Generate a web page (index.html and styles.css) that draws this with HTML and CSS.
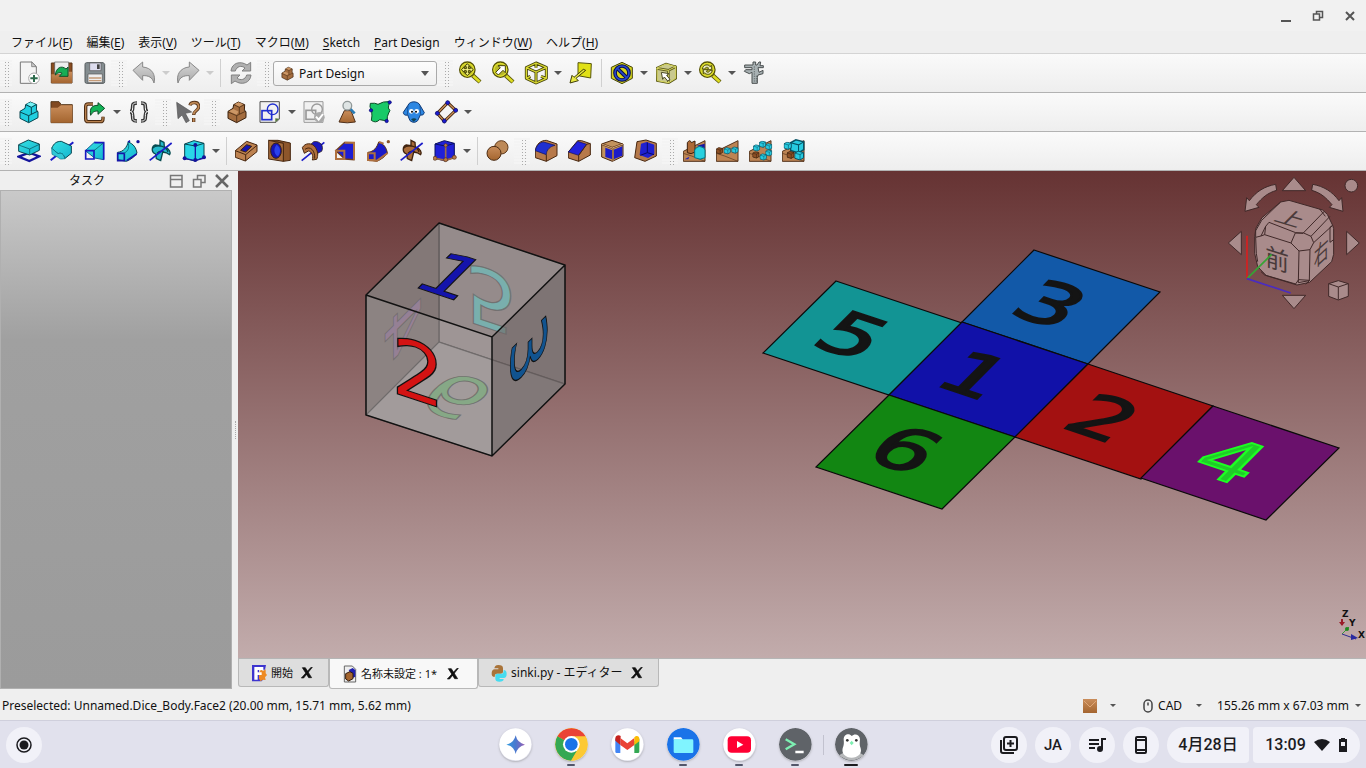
FILE: index.html
```html
<!DOCTYPE html>
<html lang="ja">
<head>
<meta charset="utf-8">
<title>FreeCAD</title>
<link rel="stylesheet" href="styles.css">
</head>
<body>
<svg class="defs" aria-hidden="true">
  <defs>
    <linearGradient id="gBrown" x1="0" y1="0" x2="0" y2="1"><stop offset="0" stop-color="#c98d5b"/><stop offset="1" stop-color="#a4652f"/></linearGradient>
    <linearGradient id="gCyan" x1="0" y1="0" x2="1" y2="1"><stop offset="0" stop-color="#34e0e2"/><stop offset="1" stop-color="#16b6d0"/></linearGradient>
    <linearGradient id="gGrey" x1="0" y1="0" x2="0" y2="1"><stop offset="0" stop-color="#d8d8d8"/><stop offset="1" stop-color="#a8a8a8"/></linearGradient>
    <linearGradient id="gGem" x1="0" y1="0" x2="1" y2="0"><stop offset="0" stop-color="#2f9be0"/><stop offset=".5" stop-color="#4b79cf"/><stop offset="1" stop-color="#9a5fb4"/></linearGradient>

    <symbol id="i-new" viewBox="0 0 72 72"><path d="M10 3h34l14 14v50H10z" fill="#f4f4f4" stroke="#777" stroke-width="3"/><path d="M44 3v14h14z" fill="#ccc" stroke="#666" stroke-width="2"/><circle cx="51" cy="52" r="16" fill="#fff" stroke="#aaa" stroke-width="3"/><path d="M51 42v21M40 52h22" stroke="#2c6b4c" stroke-width="6"/></symbol>
    <symbol id="i-open" viewBox="0 0 72 72"><path d="M4 6h62v60H4z" fill="#8a4d20" stroke="#5c3719" stroke-width="3"/><path d="M14 3h42v36H14z" fill="#eee" stroke="#555" stroke-width="2"/><path d="M4 40h28l8-8h26v34H4z" fill="url(#gBrown)"/><path d="M16 42c2-22 18-30 32-18l6-6v28H28l8-9c-8-6-14 0-20 5z" fill="#16ad55" stroke="#12502a" stroke-width="3"/></symbol>
    <symbol id="i-save" viewBox="0 0 72 72"><path d="M6 10q0-5 5-5h50l4 5v52q0 5-5 5H11q-5 0-5-5z" fill="#848d90" stroke="#555b5d" stroke-width="3"/><path d="M20 6h34v23H20z" fill="#dde" stroke="#555" stroke-width="2"/><path d="M42 10h8v14h-8z" fill="#444"/><path d="M15 39h43v26H15z" fill="#eee" stroke="#555" stroke-width="2"/><path d="M18 51h37M18 59h37" stroke="#c49a77" stroke-width="4"/></symbol>
    <symbol id="i-undo" viewBox="0 0 72 72"><path d="M3 28L32 3v15c28 2 40 24 34 48-5-17-16-23-34-22v14z" fill="url(#gGrey)" stroke="#888" stroke-width="3" stroke-linejoin="round"/></symbol>
    <symbol id="i-refresh" viewBox="0 0 72 72"><g fill="#b0b0b0" stroke="#808080" stroke-width="3" stroke-linejoin="round"><path d="M6 30C8 6 34-2 54 12l11-8v26H39l9-9C37 12 23 16 19 30z"/><path d="M6 30C8 6 34-2 54 12l11-8v26H39l9-9C37 12 23 16 19 30z" transform="rotate(180 36 36)"/></g></symbol>
    <symbol id="i-part" viewBox="0 0 72 72"><path d="M9 34l15-9 2-11 14-8 19 8-1 17 5 4v18L35 68 9 55z" fill="#a46d3f" stroke="#3a210d" stroke-width="3" stroke-linejoin="round"/><path d="M29 12l12-5 14 6-12 7zM12 34l13-7 16 8-7 9z" fill="#cc9766"/><path d="M9 36l26 11 28-14M35 47v20M26 14l17 8v20M43 22l15-8" fill="none" stroke="#3a210d" stroke-width="2"/></symbol>
    <symbol id="i-partc" viewBox="0 0 72 72"><path d="M9 34l15-9 2-11 14-8 19 8-1 17 5 4v18L35 68 9 55z" fill="#20cfe0" stroke="#08444e" stroke-width="3" stroke-linejoin="round"/><path d="M29 12l12-5 14 6-12 7z" fill="#78f2f4"/><path d="M9 36l26 11 28-14M35 47v20M26 14l17 8v20M43 22l15-8" fill="none" stroke="#08444e" stroke-width="3"/></symbol>
    <symbol id="i-lens" viewBox="0 0 72 72"><path d="M44 43l22 20" stroke="#585406" stroke-width="13"/><path d="M45 44l20 18" stroke="#dcdc22" stroke-width="8"/><circle cx="28" cy="26" r="23" fill="#b9b92a" stroke="#585406" stroke-width="4"/><circle cx="28" cy="26" r="19" fill="none" stroke="#dede2c" stroke-width="4"/></symbol>
    <symbol id="i-fit" viewBox="0 0 72 72"><use href="#i-lens"/><path d="M28 8l8 9h-5v6h6v-5l9 8-9 8v-5h-6v6h5l-8 9-8-9h5v-6h-6v5l-9-8 9-8v5h6v-6h-5z" fill="#f4f480" stroke="#454207" stroke-width="3"/></symbol>
    <symbol id="i-fitsel" viewBox="0 0 72 72"><use href="#i-lens"/><path d="M14 34l14-14-7-6h22v21l-7-7-14 14z" fill="#fff" stroke="#454207" stroke-width="3"/></symbol>
    <symbol id="i-iso" viewBox="0 0 72 72"><g fill="none" stroke-linejoin="round"><path d="M36 6l31 13v33L36 66 7 52V20zM7 20l29 13 31-14M36 33v32M36 6v14M7 52l12-6M67 52l-16-6" stroke="#45430a" stroke-width="9"/><path d="M36 6l31 13v33L36 66 7 52V20zM7 20l29 13 31-14M36 33v32M36 6v14M7 52l12-6M67 52l-16-6" stroke="#d8d832" stroke-width="4"/></g></symbol>
    <symbol id="i-face" viewBox="0 0 72 72"><path d="M30 5l40 3-2 43-38-7z" fill="#e1e116" stroke="#55540b" stroke-width="3"/><path d="M53 28L24 52l7 7-25 7 6-23 6 6 28-24z" fill="#e9e942" stroke="#3f3e08" stroke-width="3"/></symbol>
    <symbol id="i-style" viewBox="0 0 72 72"><path d="M36 4l31 15v33L36 68 4 52V19z" fill="#d4d41c" stroke="#45430a" stroke-width="3"/><g fill="none"><circle cx="36" cy="36" r="21" stroke="#070b4e" stroke-width="11"/><path d="M22 22l28 28" stroke="#070b4e" stroke-width="11"/><circle cx="36" cy="36" r="21" stroke="#2748c8" stroke-width="5"/><path d="M22 22l28 28" stroke="#2748c8" stroke-width="5"/></g></symbol>
    <symbol id="i-boxsel" viewBox="0 0 72 72"><path d="M8 20L36 7l31 9v37L44 67 8 60z" fill="#c9c98e" stroke="#5a581a" stroke-width="4" stroke-linejoin="round"/><path d="M8 22l35 6 24-12M43 28v38" fill="none" stroke="#5a581a" stroke-width="8"/><path d="M9 21L36 9l29 8v35L44 65 10 59zM8 22l35 6 24-12M43 28v38" fill="none" stroke="#dada62" stroke-width="3"/><path d="M22 34l23 4-7 5 10 12-7 5-10-12-5 7z" fill="#fff" stroke="#4c4c25" stroke-width="3"/></symbol>
    <symbol id="i-zoom" viewBox="0 0 72 72"><use href="#i-lens"/><path d="M13 24c2-15 19-15 23-7l5-4v13H27l5-5c-6-5-11 0-12 3zM43 28c-3 15-19 14-23 7l-4 4V26h13l-4 6c6 4 10 0 11-4z" fill="#ececc0" stroke="#55530f" stroke-width="3"/></symbol>
    <symbol id="i-caliper" viewBox="0 0 72 72"><path d="M8 12h25V3h8v9h4l6-9h5l-2 11h10v6H48l3 14 12-6v10l-15 4-2 7v18H30V34l-8 4-15-7 4-5h19v-6H8z" fill="#a8b1b3" stroke="#4b5051" stroke-width="3"/><path d="M37 16v46M43 44v18" stroke="#4a5051" stroke-width="2" stroke-dasharray="4 3"/></symbol>

    <symbol id="i-group" viewBox="0 0 72 72"><path d="M3 5h24l7 9h33v54H3z" fill="#824a22" stroke="#57391d" stroke-width="3"/><path d="M3 23h20l10-7h34v52H3z" fill="url(#gBrown)"/></symbol>
    <symbol id="i-link" viewBox="0 0 72 72"><path d="M30 12H16q-8 0-8 8v36q0 9 8 9h36q8 0 8-9v-6" fill="none" stroke="#4b2b12" stroke-width="10"/><path d="M30 12H16q-8 0-8 8v36q0 9 8 9h36q8 0 8-9v-6" fill="none" stroke="#b9824f" stroke-width="4"/><path d="M23 46c-4-22 4-30 22-30V8l20 17-20 18v-10c-10 0-16 2-22 13z" fill="#12b357" stroke="#0a4b24" stroke-width="3"/></symbol>
    <symbol id="i-brace" viewBox="0 0 72 72"><g fill="none" stroke="#333" stroke-width="11"><path d="M30 9c-13 0-13 5-13 13 0 7-1 13-8 13 7 0 8 6 8 14 0 9 0 14 13 14"/><path d="M42 9c13 0 13 5 13 13 0 7 1 13 8 13-7 0-8 6-8 14 0 9 0 14-13 14"/></g><g fill="none" stroke="#fff" stroke-width="3"><path d="M29 9c-12 0-12 5-12 13 0 7-1 13-7 13 6 0 7 6 7 14 0 9 0 14 12 14"/><path d="M43 9c12 0 12 5 12 13 0 7 1 13 7 13-6 0-7 6-7 14 0 9 0 14-12 14"/></g></symbol>
    <symbol id="i-what" viewBox="0 0 72 72"><path d="M2 7l45 29-19 4 12 22-10 6-12-23-12 11z" fill="#6e6e70" stroke="#555" stroke-width="2"/><path d="M42 16c2-10 26-14 26 4 0 13-14 10-15 25M53 54v12" fill="none" stroke="#58351b" stroke-width="10"/><path d="M42 15c4-8 26-12 26 5 0 13-14 10-15 23M53 55v10" fill="none" stroke="#c18a56" stroke-width="5"/></symbol>
    <symbol id="i-sketch" viewBox="0 0 72 72"><path d="M6 5h58v52l-10 10H6z" fill="#f1f1f1" stroke="#4e4e4e" stroke-width="3"/><path d="M64 56l-12 11V55z" fill="#57793b"/><rect x="12" y="32" width="29" height="27" fill="none" stroke="#202fd0" stroke-width="5"/><circle cx="44" cy="28" r="16" fill="none" stroke="#202fd0" stroke-width="4"/></symbol>
    <symbol id="i-check" viewBox="0 0 72 72"><path d="M6 5h57v62H6z" fill="#f1f1f1" stroke="#999" stroke-width="3"/><rect x="12" y="31" width="29" height="27" fill="none" stroke="#999" stroke-width="5"/><circle cx="45" cy="28" r="16" fill="none" stroke="#999" stroke-width="4"/><circle cx="52" cy="52" r="16" fill="#aaa"/><path d="M42 50l8 9 13-17" fill="none" stroke="#fff" stroke-width="6"/></symbol>
    <symbol id="i-map" viewBox="0 0 72 72"><path d="M28 32h20l13 34q-24 5-49 0z" fill="url(#gBrown)" stroke="#50301a" stroke-width="3"/><path d="M45 26l14 14" stroke="#267ab4" stroke-width="8"/><circle cx="37" cy="17" r="13" fill="#dfe5e5" stroke="#909898" stroke-width="4"/></symbol>
    <symbol id="i-shape" viewBox="0 0 72 72"><path d="M7 10q15-2 23 3Q45 3 66 5q-5 12-5 19 9 8 1 15-6 10-4 25-14-4-23-5-12 12-25 2 3-12 1-29Q3 20 7 10z" fill="#18c968" stroke="#0c4d27" stroke-width="3"/><g fill="#1818c8" stroke="#06066a" stroke-width="2"><circle cx="65" cy="7" r="5"/><circle cx="9" cy="31" r="5"/><circle cx="56" cy="63" r="5"/></g></symbol>
    <symbol id="i-sheep" viewBox="0 0 72 72"><path d="M21 16C25 2 52 2 57 16l13 22q-3 10-12 7L50 62q-11 10-23 0l-7-17q-12 3-13-8z" fill="#2d87e2" stroke="#113c79" stroke-width="3"/><path d="M21 17l-2 27M57 17l2 27" stroke="#113c79" stroke-width="2"/><circle cx="31" cy="34" r="7" fill="#fff"/><circle cx="47" cy="34" r="7" fill="#fff"/><circle cx="33" cy="35" r="3"/><circle cx="45" cy="35" r="3"/><path d="M30 58q9-7 17 0l-9 7z" fill="#145"/></symbol>
    <symbol id="i-datum" viewBox="0 0 72 72"><path d="M41 8l24 23-34 33L10 40z" fill="none" stroke="#41240e" stroke-width="9"/><path d="M41 8l24 23-34 33L10 40z" fill="none" stroke="#c88d57" stroke-width="4"/><g fill="#1c1cd0" stroke="#090962" stroke-width="2"><circle cx="41" cy="8" r="6"/><circle cx="65" cy="31" r="6"/><circle cx="31" cy="63" r="6"/><circle cx="10" cy="40" r="6"/></g></symbol>

    <symbol id="i-pad" viewBox="0 0 72 72"><path d="M5 53l32-12 30 11-30 14z" fill="none" stroke="#15159c" stroke-width="7"/><path d="M5 17L34 3l33 12v19L38 48 5 37z" fill="url(#gCyan)" stroke="#08444e" stroke-width="3"/><path d="M5 18l33 12 29-14M38 30v17" fill="none" stroke="#08444e" stroke-width="2"/></symbol>
    <symbol id="i-rev" viewBox="0 0 72 72"><path d="M2 64L70 10" stroke="#1c1cc8" stroke-width="6"/><path d="M5 28C12 12 20 7 34 7l30 14v22L44 59C42 46 34 40 24 44z" fill="url(#gCyan)" stroke="#08444e" stroke-width="3"/><path d="M5 28l19 16C34 40 42 46 44 59c-12 2-14 2-20-4L6 46z" fill="#30c8d6" stroke="#0a7c91" stroke-width="2"/></symbol>
    <symbol id="i-loft" viewBox="0 0 72 72"><path d="M7 35L34 10l28 1v51L35 57z" fill="url(#gCyan)" stroke="#11619a" stroke-width="3"/><path d="M34 11h28v51M8 35h25v25H8z" fill="none" stroke="#1919c0" stroke-width="5"/><path d="M33 35l28-23" stroke="#055" stroke-width="2"/></symbol>
    <symbol id="i-pipe" viewBox="0 0 72 72"><path d="M5 40c18-2 27-15 32-31 15 6 23 16 26 33-8 12-18 19-32 25L5 62z" fill="url(#gCyan)" stroke="#08444e" stroke-width="3"/><path d="M5 43h20v22H5zM36 10l6-5M62 45L32 65" fill="none" stroke="#1515a8" stroke-width="5"/><path d="M24 43q20-10 12-33" fill="none" stroke="#087d90" stroke-width="3"/><circle cx="66" cy="8" r="5" fill="#12129a"/></symbol>
    <symbol id="i-helix" viewBox="0 0 72 72"><path d="M33 4l12 6 1 14c16 4 20 18 16 23-8-6-14-8-21-7l-6 25-13-6-2-14C5 39 8 22 19 18l14 2z" fill="#25b9cb" stroke="#064b50" stroke-width="4"/><path d="M10 28c14-14 42-7 47 11M24 43q10-10 21-4" fill="none" stroke="#064b50" stroke-width="4"/><path d="M2 64L68 12" stroke="#1c1cc8" stroke-width="5"/></symbol>
    <symbol id="i-box" viewBox="0 0 72 72"><path d="M8 15L36 5l30 8v42L38 66 8 58z" fill="#29d6e7" stroke="#08444e" stroke-width="3"/><path d="M8 15l32 6 26-8" fill="none" stroke="#08444e" stroke-width="3"/><path d="M6 58l34 7 26-8M40 20v42" fill="none" stroke="#1919a8" stroke-width="4"/><g fill="#14149a"><circle cx="40" cy="18" r="6"/><circle cx="8" cy="58" r="6"/><circle cx="66" cy="55" r="6"/><circle cx="40" cy="63" r="6"/></g></symbol>
    <symbol id="i-pocket" viewBox="0 0 72 72"><path d="M1 35L35 7l31 11v20L31 66 1 55z" fill="#bd8250" stroke="#48270f" stroke-width="3"/><path d="M1 35l31 12 34-28M32 47v19" fill="none" stroke="#48270f" stroke-width="3"/><path d="M17 34l18-17 15 5-18 17z" fill="#1414b4" stroke="#3a210d" stroke-width="3"/></symbol>
    <symbol id="i-hole" viewBox="0 0 72 72"><path d="M2 4h28l37 8v52l-21 3V13z" fill="#8d562b" stroke="#48270f" stroke-width="3"/><path d="M2 4l44 9v54L2 60z" fill="#a76d3d" stroke="#48270f" stroke-width="3"/><ellipse cx="24" cy="35" rx="16" ry="23" fill="#1414b4" stroke="#3a210d" stroke-width="3"/><path d="M26 17c-9 9-10 26 3 35 10-9 10-27-3-35" fill="#2a42ec"/></symbol>
    <symbol id="i-groove" viewBox="0 0 72 72"><path d="M2 65L70 10" stroke="#1c1cc8" stroke-width="5"/><path d="M38 8c20-4 32 14 24 29l-14 7-20-27z" fill="#1818bb" stroke="#26150a" stroke-width="2"/><path d="M4 26C12 11 33 10 43 25c8 12 9 26 4 36l-13 2c4-13-2-26-12-27l-12 7z" fill="#b0713e" stroke="#48270f" stroke-width="3"/><path d="M12 31c16-12 31 4 29 28" fill="none" stroke="#48270f" stroke-width="3"/></symbol>
    <symbol id="i-sloft" viewBox="0 0 72 72"><path d="M5 35L32 10l28 1v51L33 60z" fill="#1c1cd2" stroke="#6c3d1b" stroke-width="4"/><path d="M32 11h28v51M6 35h25v25H6z" fill="none" stroke="#b0713e" stroke-width="6"/></symbol>
    <symbol id="i-spipe" viewBox="0 0 72 72"><path d="M3 40c18-2 27-15 32-31 15 6 23 16 26 33-8 12-18 19-32 25L3 62z" fill="#1a1ac8" stroke="#553012" stroke-width="3"/><path d="M3 43h20v20H3zM36 9l14 5M62 42L30 65 6 64" fill="none" stroke="#ad7040" stroke-width="6"/><circle cx="64" cy="8" r="5" fill="#8b572e"/></symbol>
    <symbol id="i-shelix" viewBox="0 0 72 72"><path d="M33 4l12 6 1 14c16 4 20 18 16 23-8-6-14-8-21-7l-6 25-13-6-2-14C5 39 8 22 19 18l14 2z" fill="#a96c3a" stroke="#3f230f" stroke-width="4"/><path d="M10 28c14-14 42-7 47 11M24 43q10-10 21-4" fill="none" stroke="#3f230f" stroke-width="4"/><path d="M2 64L68 12" stroke="#1c1cc8" stroke-width="5"/></symbol>
    <symbol id="i-sbox" viewBox="0 0 72 72"><path d="M6 15L34 5l30 8v42L36 66 6 58z" fill="#2020d8" stroke="#091060" stroke-width="3"/><path d="M6 15l32 6 26-8" fill="none" stroke="#091060" stroke-width="3"/><path d="M6 58l32 6 26-8M38 20v44" fill="none" stroke="#9b6a4b" stroke-width="5"/><g fill="#b97a49" stroke="#54331b" stroke-width="2"><circle cx="38" cy="19" r="5"/><circle cx="6" cy="58" r="6"/><circle cx="64" cy="55" r="6"/><circle cx="38" cy="62" r="6"/></g></symbol>
    <symbol id="i-bool" viewBox="0 0 72 72"><circle cx="46" cy="25" r="20" fill="#bd8957" stroke="#5f3818" stroke-width="3"/><circle cx="24" cy="43" r="21" fill="url(#gBrown)" stroke="#4b2b12" stroke-width="3"/></symbol>
    <symbol id="i-fillet" viewBox="0 0 72 72"><path d="M1 35C4 15 17 4 34 4l32 11v35L34 67 1 56z" fill="#b7794a" stroke="#48270f" stroke-width="3"/><path d="M1 35C4 19 14 10 26 9l34 10C46 22 34 32 34 47z" fill="#2030d0" stroke="#111158" stroke-width="2"/><path d="M34 47v20" stroke="#48270f" stroke-width="3"/></symbol>
    <symbol id="i-chamfer" viewBox="0 0 72 72"><path d="M1 39L29 5h12l26 9v34L32 67 1 57z" fill="#b7794a" stroke="#48270f" stroke-width="3"/><path d="M1 39L29 7l27 9-24 33z" fill="#2222dc" stroke="#111158" stroke-width="2"/><path d="M32 49v18M32 49l24-33 11-3" fill="none" stroke="#48270f" stroke-width="3"/></symbol>
    <symbol id="i-draft" viewBox="0 0 72 72"><path d="M2 15L33 4l33 11v37L34 67 2 54z" fill="#c2925d" stroke="#48270f" stroke-width="3"/><path d="M13 26l21 8v27l-21-7zM38 32l26-10v28L38 61z" fill="#1c1cc8"/><path d="M2 15l32 12 32-12M36 27v39" fill="none" stroke="#5b371a" stroke-width="6"/><path d="M2 15l32 12 32-12M36 27v39" fill="none" stroke="#d4a778" stroke-width="3"/></symbol>
    <symbol id="i-thick" viewBox="0 0 72 72"><path d="M9 8l27-5 31 10v38L33 67 2 56z" fill="#b5794a" stroke="#48270f" stroke-width="3"/><path d="M21 14l17-5 23 8v29L42 57 17 48z" fill="#2020d0"/><path d="M40 10v31l20 6M40 41l-21 8" fill="none" stroke="#090967" stroke-width="3"/></symbol>
    <symbol id="i-wedge" viewBox="0 0 72 72"><path d="M1 37L66 5v62H1z" fill="#bd8453" stroke="#54331b" stroke-width="3"/><path d="M1 43l25 8 40 16" fill="none" stroke="#54331b" stroke-width="2"/></symbol>
    <symbol id="i-cub" viewBox="0 0 72 72"><path d="M3 18L28 4l38 10v37L41 67 3 55z" fill="#27cbe0" stroke="#075264" stroke-width="7"/><path d="M3 18l38 10 25-14M41 28v39" fill="none" stroke="#075264" stroke-width="5"/></symbol>
    <symbol id="i-cubb" viewBox="0 0 72 72"><path d="M3 18L28 4l38 10v37L41 67 3 55z" fill="#8c4f24" stroke="#3b200d" stroke-width="7"/><path d="M3 18l38 10 25-14M41 28v39" fill="none" stroke="#3b200d" stroke-width="5"/></symbol>
    <symbol id="i-mirror" viewBox="0 0 72 72"><use href="#i-wedge"/><path d="M13 11q8-12 12 0l11-5v33q-12 9-23 2z" fill="#ad6a37" stroke="#3b200d" stroke-width="3"/><path d="M42 20l23-6v16l-12-5z" fill="#1515a8"/><path d="M35 33q3-8 14-11 17 3 17 11v23q-14 9-31 0z" fill="#29d0df" stroke="#087080" stroke-width="3"/><path d="M5 61l14-8-3 8z" fill="#22b"/></symbol>
    <symbol id="i-linear" viewBox="0 0 72 72"><use href="#i-wedge"/><use href="#i-cubb" x="0" y="24" width="22" height="23"/><use href="#i-cub" x="23" y="24" width="22" height="23"/><use href="#i-cub" x="46" y="22" width="22" height="23"/></symbol>
    <symbol id="i-polar" viewBox="0 0 72 72"><use href="#i-wedge"/><use href="#i-cub" x="12" y="16" width="22" height="22"/><use href="#i-cub" x="30" y="5" width="22" height="22"/><use href="#i-cub" x="49" y="12" width="21" height="22"/><use href="#i-cub" x="49" y="31" width="21" height="22"/><use href="#i-cub" x="32" y="43" width="22" height="22"/><use href="#i-cubb" x="10" y="37" width="22" height="22"/></symbol>
    <symbol id="i-multi" viewBox="0 0 72 72"><use href="#i-wedge"/><use href="#i-cub" x="24" y="0" width="45" height="45"/><use href="#i-cub" x="5" y="8" width="25" height="25"/><use href="#i-cubb" x="14" y="36" width="24" height="24"/><use href="#i-cub" x="37" y="35" width="30" height="30"/></symbol>
    <symbol id="i-x" viewBox="0 0 36 36"><path d="M4 2h9l19 30h-9zM30 1h4L8 33H1z" fill="#111" stroke="#111" stroke-width="2"/></symbol>
  </defs>
</svg>

<header class="titlebar">
  <button aria-label="最小化"><svg width="12" height="12"><path d="M1 11h10" stroke="#555" stroke-width="2"/></svg></button>
  <button aria-label="元に戻す"><svg width="12" height="12" viewBox="0 0 24 24" fill="none" stroke="#555" stroke-width="3"><path d="M3 8h12v12H3zM9 8V3h12v12h-6"/></svg></button>
  <button aria-label="閉じる"><svg width="12" height="12"><path d="M2 2l8 8M10 2l-8 8" stroke="#555" stroke-width="2"/></svg></button>
</header>

<nav class="menubar">
  <button>ファイル(<u>F</u>)</button><button>編集(<u>E</u>)</button><button>表示(<u>V</u>)</button><button>ツール(<u>T</u>)</button><button>マクロ(<u>M</u>)</button><button><u>S</u>ketch</button><button><u>P</u>art Design</button><button>ウィンドウ(<u>W</u>)</button><button>ヘルプ(<u>H</u>)</button>
</nav>

<div class="toolbar">
  <i class="grip first"></i>
  <button class="tb" aria-label="新規"><svg><use href="#i-new"/></svg></button>
  <button class="tb" aria-label="開く"><svg><use href="#i-open"/></svg></button>
  <button class="tb" aria-label="保存"><svg><use href="#i-save"/></svg></button>
  <i class="grip"></i>
  <button class="tb" aria-label="元に戻す" disabled><svg><use href="#i-undo"/></svg></button><button class="drop" aria-label="履歴" disabled></button>
  <button class="tb flip" aria-label="やり直し" disabled><svg><use href="#i-undo"/></svg></button><button class="drop" aria-label="履歴" disabled></button>
  <i class="sep"></i>
  <button class="tb" aria-label="更新" disabled><svg><use href="#i-refresh"/></svg></button>
  <i class="grip"></i>
  <div class="combo"><svg><use href="#i-part"/></svg><select aria-label="ワークベンチ"><option>Part Design</option></select></div>
  <i class="grip"></i>
  <button class="tb" aria-label="全てにフィット"><svg><use href="#i-fit"/></svg></button>
  <button class="tb" aria-label="選択にフィット"><svg><use href="#i-fitsel"/></svg></button>
  <button class="tb" aria-label="アイソメトリック"><svg><use href="#i-iso"/></svg></button><button class="drop" aria-label="表示方向"></button>
  <button class="tb" aria-label="面に整列"><svg><use href="#i-face"/></svg></button>
  <i class="sep"></i>
  <button class="tb" aria-label="描画スタイル"><svg><use href="#i-style"/></svg></button><button class="drop" aria-label="描画スタイル一覧"></button>
  <button class="tb" aria-label="ボックス選択"><svg><use href="#i-boxsel"/></svg></button><button class="drop" aria-label="選択一覧"></button>
  <button class="tb" aria-label="ズーム"><svg><use href="#i-zoom"/></svg></button><button class="drop" aria-label="ズーム一覧"></button>
  <button class="tb" aria-label="計測"><svg><use href="#i-caliper"/></svg></button>
</div>

<div class="toolbar">
  <i class="grip first"></i>
  <button class="tb" aria-label="パート"><svg><use href="#i-partc"/></svg></button>
  <button class="tb" aria-label="グループ"><svg><use href="#i-group"/></svg></button>
  <button class="tb" aria-label="リンク"><svg><use href="#i-link"/></svg></button><button class="drop" aria-label="リンク一覧"></button>
  <button class="tb" aria-label="変数セット"><svg><use href="#i-brace"/></svg></button>
  <i class="grip"></i>
  <button class="tb" aria-label="これは何?"><svg><use href="#i-what"/></svg></button>
  <i class="grip"></i>
  <button class="tb" aria-label="ボディー"><svg><use href="#i-part"/></svg></button>
  <button class="tb" aria-label="スケッチ"><svg><use href="#i-sketch"/></svg></button><button class="drop" aria-label="スケッチ一覧"></button>
  <button class="tb" aria-label="スケッチ検証" disabled><svg><use href="#i-check"/></svg></button>
  <button class="tb" aria-label="ジオメトリー確認"><svg><use href="#i-map"/></svg></button>
  <button class="tb" aria-label="サブシェイプバインダー"><svg><use href="#i-shape"/></svg></button>
  <button class="tb" aria-label="クローン"><svg><use href="#i-sheep"/></svg></button>
  <button class="tb" aria-label="データム"><svg><use href="#i-datum"/></svg></button><button class="drop" aria-label="データム一覧"></button>
</div>

<div class="toolbar">
  <i class="grip first"></i>
  <button class="tb" aria-label="パッド"><svg><use href="#i-pad"/></svg></button>
  <button class="tb" aria-label="レボリューション"><svg><use href="#i-rev"/></svg></button>
  <button class="tb" aria-label="加算ロフト"><svg><use href="#i-loft"/></svg></button>
  <button class="tb" aria-label="加算パイプ"><svg><use href="#i-pipe"/></svg></button>
  <button class="tb" aria-label="加算らせん"><svg><use href="#i-helix"/></svg></button>
  <button class="tb" aria-label="加算プリミティブ"><svg><use href="#i-box"/></svg></button><button class="drop" aria-label="加算一覧"></button>
  <i class="sep"></i>
  <button class="tb" aria-label="ポケット"><svg><use href="#i-pocket"/></svg></button>
  <button class="tb" aria-label="ホール"><svg><use href="#i-hole"/></svg></button>
  <button class="tb" aria-label="グルーブ"><svg><use href="#i-groove"/></svg></button>
  <button class="tb" aria-label="減算ロフト"><svg><use href="#i-sloft"/></svg></button>
  <button class="tb" aria-label="減算パイプ"><svg><use href="#i-spipe"/></svg></button>
  <button class="tb" aria-label="減算らせん"><svg><use href="#i-shelix"/></svg></button>
  <button class="tb" aria-label="減算プリミティブ"><svg><use href="#i-sbox"/></svg></button><button class="drop" aria-label="減算一覧"></button>
  <i class="sep"></i>
  <button class="tb" aria-label="ブーリアン"><svg><use href="#i-bool"/></svg></button>
  <i class="grip"></i>
  <button class="tb" aria-label="フィレット"><svg><use href="#i-fillet"/></svg></button>
  <button class="tb" aria-label="面取り"><svg><use href="#i-chamfer"/></svg></button>
  <button class="tb" aria-label="抜き勾配"><svg><use href="#i-draft"/></svg></button>
  <button class="tb" aria-label="厚み"><svg><use href="#i-thick"/></svg></button>
  <i class="grip"></i>
  <button class="tb" aria-label="鏡像"><svg><use href="#i-mirror"/></svg></button>
  <button class="tb" aria-label="直線パターン"><svg><use href="#i-linear"/></svg></button>
  <button class="tb" aria-label="円形パターン"><svg><use href="#i-polar"/></svg></button>
  <button class="tb" aria-label="マルチ変換"><svg><use href="#i-multi"/></svg></button>
</div>

<main class="work">
  <aside class="dock">
    <div class="dock-title"><span>タスク</span>
      <button aria-label="折りたたむ"><svg width="14" height="14" viewBox="0 0 28 28" fill="none" stroke="#777" stroke-width="3"><path d="M3 3h23v23H3zM3 11h23"/></svg></button>
      <button aria-label="切り離す"><svg width="14" height="14" viewBox="0 0 28 28" fill="none" stroke="#777" stroke-width="3"><path d="M3 11h15v15H3zM11 10V3h15v14h-7"/></svg></button>
      <button aria-label="閉じる"><svg width="14" height="14" viewBox="0 0 28 28"><path d="M2 2l24 24M26 2L2 26" stroke="#666" stroke-width="5"/></svg></button>
    </div>
    <div class="dock-body"></div>
  </aside>
  <div class="splitter"><i></i></div>
  <section class="mdi">
    <div class="view">
      <svg viewBox="238 171 1128 487" role="img" aria-label="3Dビュー">
        <g stroke="#4b4444" stroke-opacity=".6">
          <path d="M439 223l126 42v119l-126-42z" fill="#958a8a"/>
          <path d="M439 223l-73 72v120l73-73z" fill="#7c706f"/>
          <path d="M439 342l126 42-73 72-126-41z" fill="#9b9393"/>
          <path d="M439 223v119l126 42M439 342l-73 73" fill="none" stroke="#4a4848" stroke-width="1.500"/>
        </g>
        <path d="M439 223l126 42-73 72-126-42z" fill="#989090" fill-opacity=".25"/>
        <path d="M366 295l126 42v119l-126-41z" fill="#b4aeae" fill-opacity=".3"/>
        <g class="num ghost">
          <text transform="matrix(0 -1.195 -.73 .73 439 342)" x="20" y="74" fill="#958095">4</text>
          <text transform="matrix(1.26 .42 0 -1.195 439 342)" x="20" y="74" fill="#79afad">5</text>
          <text transform="matrix(1.26 .42 .73 -.73 366 415)" x="21" y="74" fill="#86a886">6</text>
        </g>
        <path d="M565 265v119l-73 72V337z" fill="#706565" fill-opacity=".6"/>
        <path d="M439 223l126 42v119l-73 72-126-41V295zM366 295l126 42 73-72M492 337v119" fill="none" stroke="#111" stroke-width="1.500"/>
        <g class="num edged">
          <text transform="matrix(1.26 .42 -.73 .73 439 223)" x="18" y="74" fill="#1414ac">1</text>
          <text transform="matrix(1.26 .42 0 1.195 366 295)" x="20" y="74" fill="#d41313">2</text>
          <text transform="matrix(0 1.195 -.73 .73 565 265)" x="20" y="74" fill="#11538f">3</text>
        </g>
        <g stroke="#0a0a0a" stroke-width="1.200">
          <path d="M836 281l126 42-73 72-126-42z" fill="#129494"/>
          <path d="M1034 250l126 42-72 72-126-42z" fill="#1259a8"/>
          <path d="M962 322l126 42-73 73-126-42z" fill="#1111a8"/>
          <path d="M1088 364l125 42-72 73-126-42z" fill="#a31111"/>
          <path d="M1213 406l126 42-73 72-125-42z" fill="#6a116c"/>
          <path d="M889 395l126 42-73 72-126-42z" fill="#128612"/>
        </g>
        <g class="num solid">
          <text transform="matrix(1.26 .42 -.73 .73 836 281)" x="21" y="74">5</text>
          <text transform="matrix(1.26 .42 -.73 .73 1035 250)" x="20" y="74">3</text>
          <text transform="matrix(1.26 .42 -.73 .73 962 322)" x="18" y="74">1</text>
          <text transform="matrix(1.26 .42 -.73 .73 1088 364)" x="20" y="74">2</text>
          <text transform="matrix(1.26 .42 -.73 .73 889 395)" x="21" y="74">6</text>
          <text class="picked" transform="matrix(1.26 .42 -.73 .73 1214 406)" x="21" y="74">4</text>
        </g>
        <g class="navcube" transform="translate(1200 165) scale(.3333)">
          <path d="M282 37l35 40h-70zM282 431l35-40h-70zM85 234l39-35v70zM478 234l-38-35v70z"/>
          <path d="M227 58l3 18c-28 8-43 22-61 43l8 8-42 12 5-41 8 9c21-28 46-43 79-49zM338 58l-3 18c28 8 43 22 61 43l-8 8 41 12-4-41-8 9c-21-28-46-43-79-49z"/>
          <circle cx="454" cy="62" r="19"/>
          <path d="M415 347l30 9v38l-30 11-29-11v-38z"/><path d="M386 356l29 10 30-10M415 366v38" fill="none"/>
          <path d="M242 111l25-5 101 29 14 13 16 33 3 10v77l-6 22-66 62-38 8-92-28-26-27-9-40v-50l4-26 18-31z"/>
          <path d="M242 111l-57 55-18 31v20l16-4 14-29 10-12 80 31 22 2 64-66M197 184l-3 25 79 25 13-30M273 234l24 24 33-4 11-21-8-19-22-10-25 0M183 213l11-4M330 254l-2 93-33 6 2-95M333 214l57-60M341 233l57-52M359 132l17 22M398 181l-8 6v45l11-8M286 358l10-14 33 2-12 12M167 217l2 48 4 25M183 320l11 10 93 27" fill="none"/>
          <text transform="matrix(1 .3 -.6 .6 218 166)">上</text>
          <text transform="matrix(.95 .3 0 1 196 300)">前</text>
          <text transform="matrix(.6 -.55 0 1 341 312)">右</text>
          <path d="M141 340V212" stroke="#d82020" stroke-width="5"/><path d="M142 340l73-72" stroke="#35a535" stroke-width="5"/><path d="M141 341l131 43" stroke="#4a2cc0" stroke-width="5"/>
        </g>
        <g class="axis">
          <path d="M1342 619v6" stroke="#9a1c28" stroke-width="2"/><path d="M1339 622h6l-3 4z" fill="#9a1c28"/>
          <path d="M1342 634l7-7" stroke="#3a9a3a"/><circle cx="1347" cy="629" r="2" fill="#1d8a1d"/>
          <path d="M1342 634l14 5" stroke="#2c2c90"/><path d="M1351 634l7 4-7 2z" fill="#2a2aa0"/>
          <text x="1342" y="617">Z</text><text x="1349" y="626">Y</text><text x="1358" y="638">X</text>
        </g>
      </svg>
    </div>
    <div class="tabs" role="tablist">
      <div class="tab" role="tab"><svg width="16" height="18" viewBox="0 0 48 54"><path d="M3 3h42l-3 14H24v9h14l2 16-8 10H3z" fill="#3e35cf"/><path d="M24 26l6-9 6 4 8-5v12l4 5-6 7 2 8-9-1-6 5-5-8z" fill="#ee8a22"/><path d="M10 9h27v9H20v7h12v8H20v14H10z" fill="#fff"/></svg><span>開始</span><button aria-label="閉じる"><svg width="12" height="12"><use href="#i-x"/></svg></button></div>
      <div class="tab active" role="tab" aria-selected="true"><svg width="14" height="18" viewBox="0 0 42 54"><path d="M4 3h24l10 10v38H4z" fill="#eee" stroke="#666" stroke-width="3"/><path d="M17 15l12-6 8 6v20l-8 4z" fill="#2020b0"/><path d="M8 26l13-6 9 5v16l-13 7-9-6z" fill="#a4652f" stroke="#321a0b" stroke-width="3"/></svg><span>名称未設定 : 1*</span><button aria-label="閉じる"><svg width="12" height="12"><use href="#i-x"/></svg></button></div>
      <div class="tab" role="tab"><svg width="16" height="18" viewBox="0 0 48 54"><path d="M10 15Q10 3 22 3q14 0 14 10v11q0 5-7 5H18q-7 0-7 10-10 0-9-13 1-9 9-10h11v-3H10z" fill="#a9743a"/><path d="M38 18q9 0 9 12 0 12-9 12H26v3h12q0 8-13 8-12 0-12-9V34q0-5 6-5h13q6 0 6-11z" fill="#45dcf0"/></svg><span class="latin">sinki.py - エディター</span><button aria-label="閉じる"><svg width="12" height="12"><use href="#i-x"/></svg></button></div>
    </div>
  </section>
</main>

<footer class="status">
  <span class="msg">Preselected: Unnamed.Dice_Body.Face2 (20.00 mm, 15.71 mm, 5.62 mm)</span>
  <button class="notify" aria-label="通知"><svg width="14" height="14"><rect width="14" height="14" fill="url(#gBrown)"/><path d="M1 2l6 6 6-6" fill="none" stroke="#dfa777"/></svg><i class="caret"></i></button>
  <button class="navstyle"><svg width="10" height="14" viewBox="0 0 20 28" fill="none" stroke="#444" stroke-width="3"><rect x="2" y="2" width="16" height="24" rx="8"/><path d="M10 7v6"/></svg>CAD<i class="caret"></i></button>
  <button class="dims">155.26 mm x 67.03 mm<i class="caret"></i></button>
</footer>

<div class="shelf">
  <button class="round launcher" aria-label="ランチャー"><svg width="18" height="18" viewBox="0 0 36 36"><circle cx="18" cy="18" r="14" fill="none" stroke="#1b1b1f" stroke-width="3"/><circle cx="18" cy="18" r="9" fill="#1b1b1f"/></svg></button>
  <div class="apps">
    <button class="app" aria-label="Gemini"><svg viewBox="0 0 99 99"><circle cx="49" cy="49" r="48" fill="#fff"/><path d="M50 22q5 23 28 28-23 5-28 28-5-23-28-28 23-5 28-28z" fill="url(#gGem)"/></svg></button>
    <button class="app run" aria-label="Chrome"><svg viewBox="0 0 99 99"><circle cx="49" cy="49" r="49" fill="#fcc934"/><path d="M49 49L7 25A49 49 0 0 1 92 25z" fill="#ea4335"/><path d="M49 49L7 25a49 49 0 0 0 41 73l22-37z" fill="#34a853"/><path d="M49 25h43q6 10 6 24a49 49 0 0 1-49 49l22-37z" fill="#fcc934"/><circle cx="49" cy="49" r="25" fill="#fff"/><circle cx="49" cy="49" r="19" fill="#1a73e8"/></svg></button>
    <button class="app" aria-label="Gmail"><svg viewBox="0 0 99 99"><circle cx="49" cy="49" r="48" fill="#fff"/><path d="M13 32v39q0 4 4 4h11V40z" fill="#4285f4"/><path d="M85 32v39q0 4-4 4H70V40z" fill="#34a853"/><path d="M13 38v-7c0-9 10-12 16-7l-1 27z" fill="#c5221f"/><path d="M28 30l21 16 21-16v21L49 66 28 51z" fill="#ea4335"/><path d="M70 28c7-8 15-3 15 4v8L70 51z" fill="#fbbc04"/></svg></button>
    <button class="app run" aria-label="ファイル"><svg viewBox="0 0 99 99"><circle cx="49" cy="49" r="49" fill="#1a73e8"/><path d="M20 28h22l6 7h-28z" fill="#fff"/><path d="M20 34h55q4 0 4 4v33q0 4-4 4H24q-4 0-4-4z" fill="#80f4ff"/></svg></button>
    <button class="app run" aria-label="YouTube"><svg viewBox="0 0 99 99"><circle cx="49" cy="49" r="48" fill="#fff"/><rect x="14" y="25" width="70" height="49" rx="12" fill="#f03"/><path d="M42 39l19 11-19 10z" fill="#fff"/></svg></button>
    <button class="app run" aria-label="ターミナル"><svg viewBox="0 0 99 99"><circle cx="49" cy="49" r="49" fill="#5f6368"/><path d="M20 34l26 15-26 15" fill="none" stroke="#7defb2" stroke-width="7"/><path d="M49 72h25" stroke="#fff" stroke-width="7"/></svg></button>
    <i class="divider"></i>
    <button class="app run current" aria-label="Linux"><svg viewBox="0 0 99 99"><circle cx="49" cy="49" r="49" fill="#5f6368"/><path d="M12 82q38-28 75 0-37 30-75 0z" fill="#b6b8ba"/><path d="M50 24c9-9 24-5 25 10-1 12-2 17 2 27 5 17-9 28-27 28S19 78 23 61c4-10 4-16 3-27 0-15 16-20 24-10z" fill="#fff"/><circle cx="37" cy="37" r="4" fill="#333"/><circle cx="64" cy="37" r="4" fill="#333"/><path d="M50 38l6 7-6 7-6-7z" fill="#7defb2"/></svg></button>
  </div>
  <div class="tray">
    <button class="round" aria-label="デスク"><svg width="20" height="20" viewBox="0 0 40 40" fill="none" stroke="#1b1b1f" stroke-width="4"><rect x="10" y="4" width="26" height="26" rx="4"/><path d="M4 10v22q0 4 4 4h22M16 17h14M23 10v14"/></svg></button>
    <button class="round">JA</button>
    <button class="round" aria-label="メディア"><svg width="20" height="20" fill="none" stroke="#1b1b1f" stroke-width="2"><path d="M2 5h10M2 9h10M2 13h6M15 14V4h4"/><circle cx="13" cy="14" r="2" fill="#1b1b1f"/></svg></button>
    <button class="round" aria-label="スマートフォン"><svg width="20" height="20" fill="none" stroke="#1b1b1f" stroke-width="2"><rect x="5" y="2" width="10" height="16" rx="1"/><path d="M5 5h10M5 15h10"/></svg></button>
    <button class="pill date">4月28日</button>
    <button class="pill time">13:09<svg width="16" height="14"><path d="M0 4q8-6 16 0L8 13z" fill="#1b1b1f"/></svg><svg width="10" height="16"><path d="M3 1h4v1h2v13H1V2h2zM3 5v4h4V5z" fill="#1b1b1f" fill-rule="evenodd"/></svg></button>
  </div>
</div>
</body>
</html>
```
FILE: styles.css
```css
* { box-sizing: border-box; }
html, body { height: 100%; }
body {
  margin: 0;
  display: flex;
  flex-direction: column;
  overflow: hidden;
  background: #efefef;
  color: #111;
  font: 12px/16px "Noto Sans", "Noto Sans CJK JP", sans-serif;
}
button {
  margin: 0; padding: 0; border: 0;
  background: none; color: inherit; font: inherit;
}
svg { display: block; flex: none; }
.defs { position: absolute; width: 0; height: 0; }

.titlebar {
  display: flex; justify-content: flex-end; align-items: center;
  gap: 20px; height: 31px; padding-right: 10px;
  background: #f1f1f1;
}
.menubar {
  display: flex; align-items: center; gap: 14px;
  height: 23px; padding: 2px 0 0 11px;
  border-bottom: 1px solid #d4d4d4;
  white-space: nowrap;
}
.menubar u { text-underline-offset: 2px; }

.toolbar {
  display: flex; align-items: center; height: 39px;
  border-bottom: 1px solid #b2b2b2;
  background: linear-gradient(#fafafa, #eee);
}
.tb { display: grid; place-items: center; width: 33px; height: 34px; flex: none; }
.tb svg { width: 24px; height: 24px; }
.flip svg { transform: scaleX(-1); }
.drop {
  width: 11px; height: 34px; flex: none;
  display: grid; place-items: center;
}
.drop::after, .caret {
  content: ""; border: 4px solid transparent;
  border-top-color: #555; border-bottom: 0;
}
.drop:disabled::after { border-top-color: #ccc; }
.grip {
  width: 16px; height: 27px; flex: none;
  background: linear-gradient(#f4f4f4 2px, transparent 2px) 0 0 / 100% 3px,
    linear-gradient(90deg, transparent 8px, #aaa 8px, #aaa 9px, transparent 9px, transparent 11px, #aaa 11px, #aaa 12px, transparent 12px);
}
.grip.first { width: 12px; background-position: 0 0, -3px 0; }
.sep {
  width: 9px; height: 28px; flex: none;
  background: linear-gradient(#d0d0d0, #d0d0d0) 5px 0 / 1px 100% no-repeat;
}
.combo {
  display: flex; align-items: center;
  width: 164px; height: 25px; padding-left: 6px;
  border: 1px solid #aaa; border-radius: 3px;
  background: linear-gradient(#fdfdfd, #f0f0f0);
}
.combo svg { width: 15px; height: 15px; }
.combo select {
  appearance: none; flex: 1; border: 0; padding: 1px 4px 0;
  background: none; color: inherit; font: inherit;
}
.combo::after {
  content: ""; margin-right: 7px;
  border: 4px solid transparent; border-top: 5px solid #555; border-bottom: 0;
}

.work { display: flex; flex: 1; min-height: 0; }
.dock { width: 232px; display: flex; flex-direction: column; }
.dock-title {
  display: flex; align-items: center; gap: 9px;
  height: 19px; padding-right: 3px;
}
.dock-title span { flex: 1; text-align: center; padding-left: 14px; }
.dock-body {
  flex: 1; border: 1px solid #b0b0b0;
  background: linear-gradient(#c9c9c9, #a0a0a0 30%, #9b9b9b);
}
.splitter { width: 6px; display: grid; place-items: center; }
.splitter i { height: 18px; border-left: 1px dotted #aaa; }
.mdi { flex: 1; min-width: 0; display: flex; flex-direction: column; }
.view {
  flex: 1; min-height: 0;
  background: linear-gradient(#663333, #c2acac);
}
.view > svg { width: 100%; height: 100%; }
.num text { font: 67px "DejaVu Sans", sans-serif; }
.ghost text { stroke: #6b6868; stroke-width: 1px; stroke-opacity: .8; }
.edged text { stroke: #111; stroke-width: 1px; }
.solid text { fill: #141414; stroke: #141414; stroke-width: 2px; }
.solid .picked { fill: #20cc28; stroke: #1cff22; stroke-width: 2px; }
.navcube { fill: #a98b8b; stroke: #3f2828; stroke-width: 3px; }
.navcube text {
  font: 75px "Noto Sans CJK JP", sans-serif;
  fill: #4a3a3a; stroke: none;
}
.axis text { font: bold 9px "DejaVu Sans", sans-serif; fill: #111; }

.tabs {
  display: flex; align-items: flex-start; height: 31px;
  border-top: 1px solid #b5b5b5;
}
.tab {
  display: flex; align-items: center; height: 28px;
  padding: 0 15px 0 12px;
  border: 1px solid #b8b8b8; border-top: 0;
  border-radius: 0 0 3px 3px;
  background: #dedede; white-space: nowrap; font-size: 11px;
}
.tab span { margin: 0 8px 0 4px; }
.tab .latin { font-size: 12px; }
.tab.active { height: 30px; padding: 0 18px 0 13px; background: #f8f8f8; }
.tab.active span { margin-right: 10px; }

.status {
  display: flex; align-items: center; height: 31px;
  padding: 2px 5px 0 2px; background: #efefef; white-space: nowrap;
}
.msg { flex: 1; }
.status button { display: flex; align-items: center; }
.caret { border-width: 3px; }
.notify { gap: 13px; margin-right: 27px; }
.navstyle { gap: 5px; margin-right: 15px; }
.navstyle .caret { margin-left: 9px; }
.dims { gap: 6px; }

.shelf {
  display: grid; grid-template-columns: 1fr auto 1fr;
  align-items: center; height: 48px; padding: 0 6px;
  border-top: 1px solid #cfcfdc; background: #e1e1ed;
  color: #1b1b1f; font: 500 16px/20px Roboto, "Noto Sans CJK JP", sans-serif;
}
.round {
  display: grid; place-items: center;
  width: 36px; height: 36px; border-radius: 50%; background: #f1f1f8;
}
.apps { display: flex; align-items: center; gap: 23px; }
.app { display: grid; justify-items: center; width: 33px; position: relative; }
.app svg { width: 33px; height: 33px; border-radius: 50%; box-shadow: 0 1px 2px #8888; }
.run::after {
  content: ""; position: absolute; bottom: -5px;
  width: 8px; height: 2px; border-radius: 1px; background: #53566a;
}
.current::after { width: 14px; background: #1b1b1f; }
.divider { width: 1px; height: 20px; margin: 0 -12px; background: #c2c2cf; }
.tray { display: flex; justify-content: flex-end; gap: 8px; }
.tray .round { font-size: 15px; }
.pill {
  display: flex; align-items: center; justify-content: center; gap: 8px;
  height: 36px; background: #f1f1f8; white-space: nowrap;
}
.date { width: 82px; border-radius: 18px 4px 4px 18px; }
.time { width: 107px; margin-left: -4px; border-radius: 4px 18px 18px 4px; }
```
